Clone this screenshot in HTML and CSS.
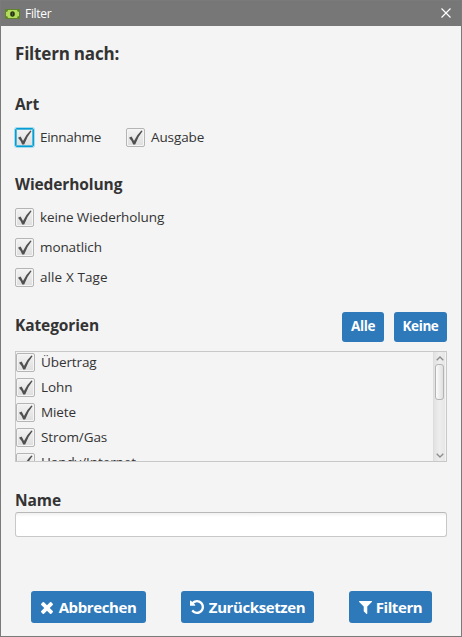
FILE: index.html
```html
<!DOCTYPE html>
<html lang="de">
<head>
<meta charset="utf-8">
<title>Filter</title>
<link rel="stylesheet" href="styles.css">
</head>
<body>
<svg class="defs" aria-hidden="true">
  <symbol id="mark" viewBox="0 0 19 19"><path d="M3 9.800 5.600 8.500Q7 11 8 13Q11 6.500 15.400 2.500L16.600 3Q12 8.600 9.200 16.400H7.200Q5.700 12.500 3 9.800Z" fill="#505050"/></symbol>
</svg>
<div class="window">
  <header class="titlebar">
    <svg class="app-icon" viewBox="0 0 15 10"><rect width="15" height="10" fill="#5e852c"/><path d="M3 1h9q0 2 2 2v4q-2 0-2 2H3q0-2-2-2V3q2 0 2-2Z" fill="#b2dc5a"/><ellipse cx="7.500" cy="5" rx="2.300" ry="2.800" fill="#28351a"/><path d="M7 3.500h1v3H7z" fill="#48652a"/></svg>
    <span class="caption">Filter</span>
    <svg class="close" viewBox="0 0 10 10"><path d="M.5.5l9 9m0-9l-9 9" stroke="#fff" stroke-width="1.200"/></svg>
  </header>
  <main class="content">
    <h1 class="title">Filtern nach:</h1>
    <h2 class="heading art">Art</h2>
    <div class="types">
      <label class="check focused"><span class="box"><svg><use href="#mark"/></svg></span><span class="income">Einnahme</span></label>
      <label class="check"><span class="box"><svg><use href="#mark"/></svg></span><span>Ausgabe</span></label>
    </div>
    <h2 class="heading repeat">Wiederholung</h2>
    <div class="repeats">
      <label class="check"><span class="box"><svg><use href="#mark"/></svg></span><span>keine Wiederholung</span></label>
      <label class="check"><span class="box"><svg><use href="#mark"/></svg></span><span>monatlich</span></label>
      <label class="check"><span class="box"><svg><use href="#mark"/></svg></span><span class="days">alle X Tage</span></label>
    </div>
    <div class="category-head">
      <h2 class="heading">Kategorien</h2>
      <button class="btn small all">Alle</button>
      <button class="btn small none">Keine</button>
    </div>
    <div class="list">
      <div class="items">
        <label class="check"><span class="box"><svg><use href="#mark"/></svg></span><span>Übertrag</span></label>
        <label class="check"><span class="box"><svg><use href="#mark"/></svg></span><span>Lohn</span></label>
        <label class="check"><span class="box"><svg><use href="#mark"/></svg></span><span>Miete</span></label>
        <label class="check"><span class="box"><svg><use href="#mark"/></svg></span><span>Strom/Gas</span></label>
        <label class="check"><span class="box"><svg><use href="#mark"/></svg></span><span>Handy/Internet</span></label>
      </div>
      <div class="scrollbar">
        <svg class="arrow" viewBox="0 0 8 5"><path d="M.7 4.300 4 1l3.300 3.300" fill="none" stroke="#8c8c8c" stroke-width="1.300"/></svg>
        <div class="thumb"></div>
        <svg class="arrow" viewBox="0 0 8 5"><path d="M.7.7 4 4 7.300.7" fill="none" stroke="#8c8c8c" stroke-width="1.300"/></svg>
      </div>
    </div>
    <h2 class="heading name">Name</h2>
    <input class="field" type="text" aria-label="Name">
    <footer class="actions">
      <button class="btn cancel"><svg viewBox="302 366 1188 1188"><path d="M1490 1322q0 40-28 68l-136 136q-28 28-68 28t-68-28l-294-294-294 294q-28 28-68 28t-68-28l-136-136q-28-28-28-68t28-68l294-294-294-294q-28-28-28-68t28-68l136-136q28-28 68-28t68 28l294 294 294-294q28-28 68-28t68 28l136 136q28 28 28 68t-28 68l-294 294 294 294q28 28 28 68z"/></svg><span>Abbrechen</span></button>
      <button class="btn reset"><svg viewBox="128 128 1536 1536"><path d="M1664 896q0 156-61 298t-164 245-245 164-298 61q-172 0-327-72.500t-264-204.500q-7-10-6.500-22.500t8.500-20.500l137-138q10-9 25-9 16 2 23 12 73 95 179 147t225 52q104 0 198.500-40.500t163.500-109.500 109.500-163.500 40.500-198.500-40.500-198.500-109.500-163.500-163.500-109.500-198.500-40.500q-98 0-188 35.500t-160 101.500l137 138q31 30 14 69-17 40-59 40h-448q-26 0-45-19t-19-45v-448q0-42 40-59 39-17 69 14l130 129q107-101 244.500-156.500t284.500-55.500q156 0 298 61t245 164 164 245 61 298z"/></svg><span>Zurücksetzen</span></button>
      <button class="btn apply"><svg viewBox="192 256 1408 1408"><path d="M1595 295q17 41-14 70l-493 493v742q0 42-39 59-13 5-25 5-27 0-45-19l-256-256q-19-19-19-45v-486l-493-493q-31-29-14-70 17-39 59-39h1280q42 0 59 39z"/></svg><span>Filtern</span></button>
    </footer>
  </main>
</div>
</body>
</html>
```
FILE: styles.css
```css
* { box-sizing: border-box; }
body { margin: 0; font-family: "Open Sans", "Noto Sans", sans-serif; color: #333; }
.defs { display: none; }
.window { width: 462px; height: 637px; border: 1px solid #7a7a7a; background: #f4f4f4; overflow: hidden; }
.titlebar { height: 25px; background: #777; display: flex; align-items: center; padding: 0 10px 0 4px; }
.app-icon { width: 15px; height: 10px; }
.caption { color: #fff; font-size: 12px; line-height: 24px; margin-left: 5px; flex: 1; letter-spacing: -0.3px; }
.close { width: 10px; height: 10px; margin-bottom: 1px; }
.content { padding: 16px 14px 0; }
.title, .heading { margin: 0; font-weight: 700; white-space: nowrap; }
.title { font-size: 17px; line-height: 24px; letter-spacing: -0.2px; }
.heading { font-size: 15.5px; line-height: 22px; letter-spacing: -0.1px; }
.art { margin-top: 27px; }
.types { display: flex; gap: 25px; margin-top: 12px; height: 20px; }
.check { display: flex; align-items: center; gap: 6px; height: 20px; font-size: 13.5px; line-height: 20px; white-space: nowrap; letter-spacing: -0.1px; }
.income { width: 61px; letter-spacing: -0.3px; }
.days { letter-spacing: 0.1px; }
.box { width: 19px; height: 19px; flex: none; border: 1px solid #b5b5b5; border-radius: 2px; background: linear-gradient(#f3f3f3, #dedede); box-shadow: inset 0 0 0 1px #f5f5f5; }
.box svg { display: block; width: 19px; height: 19px; margin: -1px; }
.focused .box { border-color: #039ed3; box-shadow: 0 0 0 1px #a5daec, inset 0 0 0 1px #55b9dc; }
.repeat { margin-top: 26px; }
.repeats { display: grid; gap: 10px; margin-top: 12px; }
.category-head { display: flex; align-items: center; margin-top: 25px; height: 30px; }
.category-head .heading { flex: 1; margin-top: -5px; }
.btn { border: 0; border-radius: 3px; background: #2e79b9; color: #fff; font: 700 15px/22px "Open Sans", "Noto Sans", sans-serif; height: 32px; padding: 0; display: flex; align-items: center; justify-content: center; white-space: nowrap; letter-spacing: -0.4px; }
.btn svg { fill: #fff; flex: none; }
.small { height: 30px; font-size: 13.5px; padding-bottom: 2px; }
.all { width: 42px; margin-right: 10px; }
.none { width: 53px; }
.list { display: flex; width: 432px; height: 111px; margin-top: 9px; border: 1px solid #c8c8c8; overflow: hidden; }
.items { flex: 1; display: flex; flex-direction: column; gap: 5px; }
.items .check { flex: none; }
.scrollbar { width: 13px; padding: 4px 0 3px; display: flex; flex-direction: column; align-items: center; border-left: 1px solid #ddd; border-right: 1px solid #f3f3f3; background: linear-gradient(90deg, #e2e2e2, #ededed 50%, #e6e6e6); }
.arrow { width: 8px; height: 5px; flex: none; }
.thumb { width: 9px; height: 36px; margin: 3px 0 auto; border: 1px solid #b4b4b4; border-radius: 3px; background: linear-gradient(90deg, #fbfbfb, #dfdfdf); }
.name { margin-top: 27px; }
.field { display: block; width: 432px; height: 25px; margin-top: 1px; border: 1px solid #c8c8c8; border-top-color: #b8b8b8; border-radius: 3px; background: linear-gradient(#f0f0f0, #fff 4px); outline: 0; padding: 0 7px; }
.actions { display: flex; gap: 35px; margin: 54px 0 0 16px; }
.cancel { width: 115px; gap: 6px; }
.cancel svg { width: 12px; height: 12px; margin-top: 1px; }
.reset { width: 133px; gap: 5px; }
.reset svg { width: 14px; height: 14px; }
.apply { width: 83px; gap: 4px; }
.apply svg { width: 13px; height: 13px; margin-top: 1px; }
```
